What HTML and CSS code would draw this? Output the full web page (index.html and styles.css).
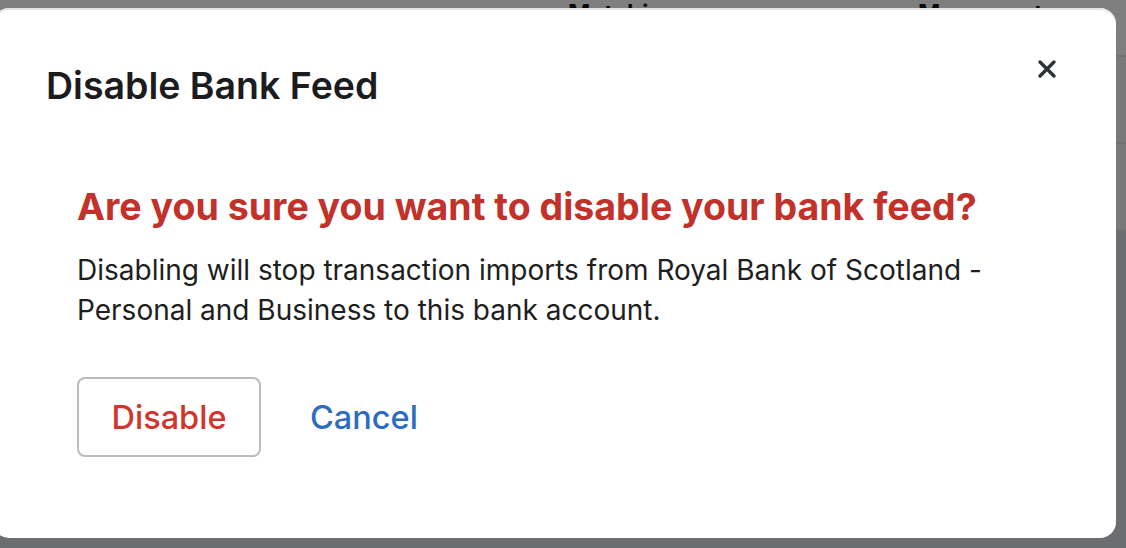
FILE: index.html
```html
<!Doctype html>
<html>

<head>
    <link rel="stylesheet" href="styles.css">
</head>

<body>
    <div class="page">
        <div class="tableHead">
            <span class="headCell first">Matching</span>
            <span class="headCell second">Movements</span>
        </div>
        <div class="tableRow"></div>
        <div class="tableRow"></div>
    </div>

    <div class="overlay"></div>

    <div class="modal">
        <div class="modalHeader">
            <h2 class="modalTitle">Disable Bank Feed</h2>
            <button class="closeButton" aria-label="Close">
                <svg width="20" height="20" viewBox="0 0 20 20">
                    <path d="M3 3 L17 17 M17 3 L3 17" stroke="#2c3237" stroke-width="3.4" stroke-linecap="round" fill="none" />
                </svg>
            </button>
        </div>
        <div class="modalBody">
            <h3 class="warning">Are you sure you want to disable your bank feed?</h3>
            <p class="message">Disabling will stop transaction imports from Royal Bank of Scotland -<br />Personal and Business to this bank account.</p>
            <div class="actions">
                <button class="disableButton">Disable</button>
                <button class="cancelButton">Cancel</button>
            </div>
        </div>
    </div>
</body>

</html>
```

FILE: styles.css
```css
* {
    font-family: Inter, "Noto Sans", sans-serif;
    box-sizing: border-box;
}

body {
    margin: 0;
    background-color: #d6dae1;
    overflow: hidden;
}

.page {
    height: 548px;
}

.tableHead {
    height: 57px;
    background-color: white;
    position: relative;
    border-bottom: 2px solid #e3e5e8;
}

.headCell {
    position: absolute;
    top: 2px;
    font-size: 24px;
    line-height: 24px;
    font-weight: bold;
    color: #111;
}

.first {
    left: 568px;
}

.second {
    left: 918px;
}

.tableRow {
    height: 87px;
    background-color: #f2f3f5;
    border-bottom: 2px solid #e3e5e8;
}

.overlay {
    position: fixed;
    top: 0;
    left: 0;
    right: 0;
    bottom: 0;
    background-color: rgba(0, 0, 0, 0.5);
}

.modal {
    position: absolute;
    top: 8px;
    left: -7px;
    width: 1123px;
    height: 530px;
    background-color: white;
    border-radius: 16px;
    box-shadow: inset 0 2px 0 #e3e4e6;
}

.modalHeader {
    display: flex;
    justify-content: space-between;
    align-items: flex-start;
    padding: 0 59px 0 53px;
}

.modalTitle {
    margin: 0;
    padding-top: 58px;
    font-size: 37.5px;
    line-height: 40px;
    font-weight: 600;
    color: #1c1c1e;
}

.closeButton {
    margin-top: 51px;
    padding: 0;
    border: none;
    background: none;
    width: 20px;
    height: 20px;
    cursor: pointer;
}

.closeButton svg {
    display: block;
}

.modalBody {
    padding: 0 0 0 84px;
}

.warning {
    margin: 79px 0 0 0;
    font-size: 37.5px;
    line-height: 44px;
    font-weight: 700;
    color: #c2312a;
}

.message {
    margin: 21px 0 0 0;
    font-size: 28px;
    line-height: 40px;
    color: #1e1e1e;
}

.actions {
    display: flex;
    align-items: center;
    gap: 49px;
    margin-top: 47px;
}

.disableButton {
    width: 184px;
    height: 80px;
    border: 2px solid #b9bdc1;
    border-radius: 8px;
    background-color: white;
    color: #d0362d;
    font-size: 32.5px;
    font-weight: 500;
    cursor: pointer;
}

.cancelButton {
    padding: 0;
    border: none;
    background: none;
    color: #2d6cc0;
    font-size: 32.5px;
    font-weight: 500;
    cursor: pointer;
}
```
